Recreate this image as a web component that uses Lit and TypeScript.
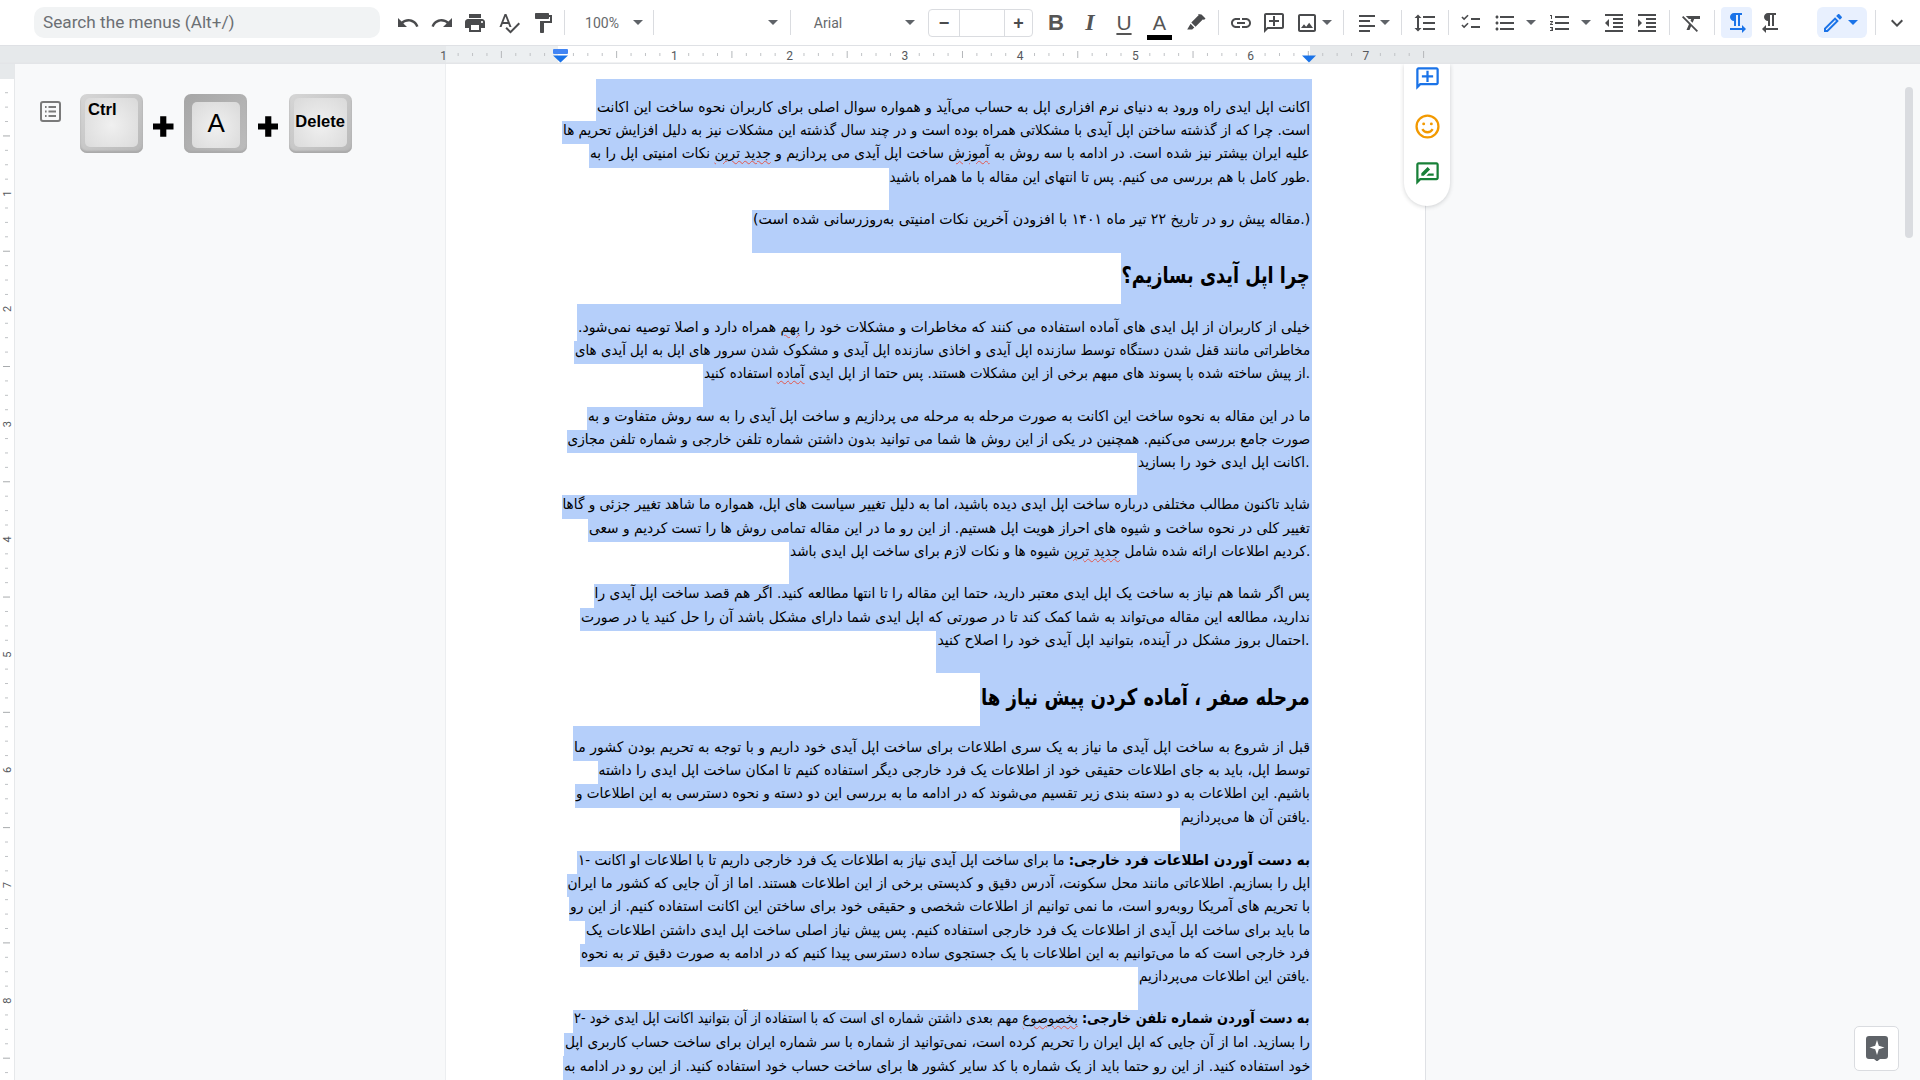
import { LitElement, html, css, svg, TemplateResult } from "lit";
import { customElement } from "lit/decorators.js";

const P: Record<string, string> = {
  undo: "M12.5 8c-2.65 0-5.05.99-6.9 2.6L2 7v9h9l-3.62-3.62c1.39-1.16 3.16-1.88 5.12-1.88 3.54 0 6.55 2.31 7.6 5.5l2.37-.78C21.08 11.03 17.15 8 12.5 8z",
  redo: "M18.4 10.6C16.55 8.99 14.15 8 11.5 8c-4.65 0-8.58 3.03-9.96 7.22L3.9 16c1.05-3.19 4.05-5.5 7.6-5.5 1.95 0 3.73.72 5.12 1.88L13 16h9V7l-3.6 3.6z",
  print: "M19 8H5c-1.66 0-3 1.34-3 3v6h4v4h12v-4h4v-6c0-1.66-1.34-3-3-3zm-3 11H8v-5h8v5zm3-7c-.55 0-1-.45-1-1s.45-1 1-1 1 .45 1 1-.45 1-1 1zm-1-9H6v4h12V3z",
  spell: "M12.45 16h2.09L9.43 3H7.57L2.46 16h2.09l1.12-3h5.64l1.14 3zm-6.02-5L8.5 5.48 10.57 11H6.43zm15.16.59l-8.09 8.09L9.83 16l-1.41 1.41 5.09 5.09L23 13l-1.41-1.41z",
  paint: "M18 4V3c0-.55-.45-1-1-1H5c-.55 0-1 .45-1 1v4c0 .55.45 1 1 1h12c.55 0 1-.45 1-1V6h1v4H9v11c0 .55.45 1 1 1h2c.55 0 1-.45 1-1v-9h8V4h-3z",
  marker: "M17.5 3.500l4 4-1.600 1.600-.9-.9-7.500 7.500-4.200-4.200 7.500-7.500-.9-.9zM6.600 12.700l3.700 3.700-2.100 2.100H3.200z",
  link: "M3.9 12c0-1.71 1.39-3.1 3.1-3.1h4V7H7c-2.76 0-5 2.24-5 5s2.24 5 5 5h4v-1.9H7c-1.71 0-3.1-1.39-3.1-3.1zM8 13h8v-2H8v2zm9-6h-4v1.9h4c1.71 0 3.1 1.39 3.1 3.1s-1.39 3.1-3.1 3.1h-4V17h4c2.76 0 5-2.24 5-5s-2.24-5-5-5z",
  comment: "M20 2H4c-1.1 0-2 .9-2 2v18l4-4h14c1.1 0 2-.9 2-2V4c0-1.1-.9-2-2-2zm0 14H5.17L4 17.17V4h16v12zM11 5h2v4h4v2h-4v4h-2v-4H7V9h4z",
  image: "M19 5v14H5V5h14m0-2H5c-1.1 0-2 .9-2 2v14c0 1.1.9 2 2 2h14c1.1 0 2-.9 2-2V5c0-1.1-.9-2-2-2zm-4.86 8.86l-3 3.87L9 13.14 6 17h12l-3.86-5.14z",
  align: "M4 4h16v2H4zM4 9h11v2H4zM4 14h16v2H4zM4 19h11v2H4z",
  spacing: "M6 7h2.5L5 3.5 1.5 7H4v10H1.5L5 20.5 8.5 17H6V7zm4-2v2h12V5H10zm0 14h12v-2H10v2zm0-6h12v-2H10v2z",
  check: "M13 7h9v2h-9zM13 15h9v2h-9zM3.4 6.6l1.1-1.1 1.6 1.6 3.4-3.4 1.1 1.1-4.5 4.5zM3.4 14.6l1.1-1.1 1.6 1.6 3.4-3.4 1.1 1.1-4.5 4.5z",
  bullets: "M4 10.5c-.83 0-1.5.67-1.5 1.5s.67 1.5 1.5 1.5 1.5-.67 1.5-1.5-.67-1.5-1.5-1.5zm0-6c-.83 0-1.5.67-1.5 1.5S3.17 7.5 4 7.5 5.5 6.83 5.5 6 4.83 4.5 4 4.5zm0 12c-.83 0-1.5.68-1.5 1.5s.68 1.5 1.5 1.5 1.5-.68 1.5-1.5-.67-1.5-1.5-1.5zM7 19h14v-2H7v2zm0-6h14v-2H7v2zm0-8v2h14V5H7z",
  numbers: "M2 17h2v.5H3v1h1v.5H2v1h3v-4H2v1zm1-9h1V4H2v1h1v3zm-1 3h1.8L2 13.1v.9h3v-1H3.2L5 10.9V10H2v1zm5-6v2h14V5H7zm0 14h14v-2H7v2zm0-6h14v-2H7v2z",
  outdent: "M11 17h10v-2H11v2zm-8-5l4 4V8l-4 4zm0 9h18v-2H3v2zM3 3v2h18V3H3zm8 6h10V7H11v2zm0 4h10v-2H11v2z",
  indent: "M3 21h18v-2H3v2zM3 8v8l4-4-4-4zm8 9h10v-2H11v2zM3 3v2h18V3H3zm8 6h10V7H11v2zm0 4h10v-2H11v2z",
  clear: "M3.27 5L2 6.27l6.97 6.97L6.5 19h3l1.57-3.66L16.73 21 18 19.73 3.55 5.27 3.27 5zM6 5v.18L8.82 8h2.4l-.72 1.68 2.1 2.1L14.21 8H20V5H6z",
  ltr: "M9 10v5h2V4h2v11h2V4h2V2H9C6.79 2 5 3.79 5 6s1.79 4 4 4zm12 8l-4-4v3H5v2h12v3l4-4z",
  rtl: "M10 10v5h2V4h2v11h2V4h2V2h-8C7.79 2 6 3.79 6 6s1.79 4 4 4zm-2 7v-3l-4 4 4 4v-3h12v-2H8z",
  pencil: "M14.06 9.02l.92.92L5.92 19H5v-.92l9.06-9.06M17.66 3c-.25 0-.51.1-.7.29l-1.83 1.83 3.75 3.75 1.83-1.83c.39-.39.39-1.02 0-1.41l-2.34-2.34c-.2-.2-.45-.29-.71-.29zm-3.6 3.19L3 17.25V21h3.75L17.81 9.94l-3.75-3.75z",
  chevron: "M16.59 8.59L12 13.17 7.41 8.59 6 10l6 6 6-6z",
  suggest: "M20 2H4c-1.1 0-2 .9-2 2v18l4-4h14c1.1 0 2-.9 2-2V4c0-1.1-.9-2-2-2zm0 14H5.17L4 17.17V4h16v12zM6.5 14v-2.2l5.6-5.6 2.2 2.2L8.7 14zM11 14l2-2h4.5v2z",
};

const icon = (n: string, cls = "ic") => html`<svg class=${cls} viewBox="0 0 24 24"><path d=${P[n]}></path></svg>`;

type Slot = { x: number; w: number; t: TemplateResult };
const ic = (n: string, cx: number): Slot => ({ x: cx - 12, w: 24, t: icon(n) });
const car = (cx: number): Slot => ({ x: cx - 5, w: 10, t: html`<i class="caret"></i>` });
const div = (cx: number): Slot => ({ x: cx - 0.5, w: 1, t: html`<i class="divider"></i>` });
const glyph = (cx: number, cls: string, s: string): Slot => ({ x: cx - 12, w: 24, t: html`<span class="glyph ${cls}">${s}</span>` });

const SLOTS: Slot[] = [
  { x: 34, w: 346, t: html`<div class="search">Search the menus (Alt+/)</div>` },
  ic("undo", 408), ic("redo", 442), ic("print", 475), ic("spell", 509), ic("paint", 543),
  div(564),
  { x: 584, w: 36, t: html`<span class="tt">100%</span>` },
  car(638), div(653), car(773), div(790),
  { x: 810, w: 36, t: html`<span class="tt">Arial</span>` },
  car(910),
  { x: 928, w: 105, t: html`<div class="size"><b>−</b><i></i><b>+</b></div>` },
  glyph(1056, "bold", "B"), glyph(1090, "ital", "I"), glyph(1124, "und", "U"),
  { x: 1147, w: 25, t: html`<span class="colorA"><span>A</span><i></i></span>` },
  ic("marker", 1196), div(1218), ic("link", 1241), ic("comment", 1274), ic("image", 1307),
  car(1327), div(1343), ic("align", 1367), car(1385), div(1401), ic("spacing", 1425), div(1448),
  ic("check", 1470), ic("bullets", 1505), car(1531), ic("numbers", 1560), car(1586),
  ic("outdent", 1614), ic("indent", 1647), div(1669), ic("clear", 1692), div(1714),
  { x: 1721, w: 31, t: html`<div class="active">${icon("ltr", "ic blue")}</div>` },
  ic("rtl", 1770),
  { x: 1817, w: 50, t: html`<div class="active wide">${icon("pencil", "ic blue")}<i class="caret bluec"></i></div>` },
  div(1875), ic("chevron", 1897),
];

type L = [number, number, string, string?];
// [top of band, left edge of selection, text, kind]
const LINES: L[] = [
  [78, 596, "اکانت اپل ایدی راه ورود به دنیای نرم افزاری اپل به حساب می\u200cآید و همواره سوال اصلی برای کاربران نحوه ساخت این اکانت", "b"],
  [120, 562, "است. چرا که از گذشته ساختن اپل آیدی با مشکلاتی همراه بوده است و در چند سال گذشته این مشکلات نیز به دلیل افزایش تحریم ها"],
  [143.3, 589, "علیه ایران بیشتر نیز شده است. در ادامه با سه روش به ~آموزش~ ساخت اپل آیدی می پردازیم و ~جدید ترین~ نکات امنیتی اپل را به"],
  [166.7, 888.5, "طور کامل با هم بررسی می کنیم. پس تا انتهای این مقاله با ما همراه باشید.", "t"],
  [209, 752, "(مقاله پیش رو در تاریخ ۲۲ تیر ماه ۱۴۰۱ با افزودن آخرین نکات امنیتی به\u200cروزرسانی شده است.)", "t"],
  [251.7, 1120.6, "چرا اپل آیدی بسازیم؟", "h"],
  [303.3, 577, "خیلی از کاربران از اپل ایدی های آماده استفاده می کنند که مخاطرات و مشکلات خود را ~بهم~ همراه دارد و اصلا توصیه نمی\u200cشود.\u200f", "b"],
  [340, 574, "مخاطراتی مانند قفل شدن دستگاه توسط سازنده اپل آیدی و اخاذی سازنده اپل آیدی و مشکوک شدن سرور های اپل به اپل آیدی های"],
  [362.7, 703, "از پیش ساخته شده با پسوند های مبهم برخی از این مشکلات هستند. پس حتما از اپل ایدی ~آماده~ استفاده کنید.", "t"],
  [406, 587, "ما در این مقاله به نحوه ساخت این اکانت به صورت مرحله به مرحله می پردازیم و ساخت اپل آیدی را به سه روش متفاوت و به"],
  [429.3, 566.5, "صورت جامع بررسی می\u200cکنیم. همچنین در یکی از این روش ها شما می توانید بدون داشتن شماره تلفن خارجی و شماره تلفن مجازی"],
  [452, 1137, "اکانت اپل ایدی خود را بسازید.", "t"],
  [494, 561.5, "شاید تاکنون مطالب مختلفی درباره ساخت اپل ایدی دیده باشید، اما به دلیل تغییر سیاست های اپل، همواره ما شاهد تغییر جزئی و گاها"],
  [517.7, 588, "تغییر کلی در نحوه ساخت و شیوه های احراز هویت اپل هستیم. از این رو ما در این مقاله تمامی روش ها را تست کردیم و سعی"],
  [541, 789, "کردیم اطلاعات ارائه شده شامل ~جدید ترین~ شیوه ها و نکات لازم برای ساخت اپل ایدی باشد.", "t"],
  [583.3, 593.6, "پس اگر شما هم نیاز به ساخت یک اپل ایدی معتبر دارید، حتما این مقاله را تا انتها مطالعه کنید. اگر هم قصد ساخت اپل آیدی را"],
  [606.7, 580, "ندارید، مطالعه این مقاله می\u200cتواند به شما کمک کند تا در صورتی که اپل ایدی شما دارای مشکل باشد آن را حل کنید یا در صورت"],
  [630, 936.4, "احتمال بروز مشکل در آینده، بتوانید اپل آیدی خود را اصلاح کنید.", "t"],
  [672.3, 980, "مرحله صفر ، آماده کردن پیش نیاز ها", "h"],
  [725, 573, "قبل از شروع به ساخت اپل آیدی ما نیاز به یک سری اطلاعات برای ساخت اپل آیدی خود داریم و با توجه به تحریم بودن کشور ما", "b"],
  [760, 597.5, "توسط اپل، باید به جای اطلاعات حقیقی خود از اطلاعات یک فرد خارجی دیگر استفاده کنیم تا امکان ساخت اپل ایدی را داشته"],
  [783.3, 575, "باشیم. این اطلاعات به دو دسته بندی زیر تقسیم می\u200cشوند که در ادامه ما به بررسی این دو دسته و نحوه دسترسی به این اطلاعات و"],
  [806.7, 1180, "یافتن آن ها می\u200cپردازیم.", "t"],
  [850, 577, "۱- **به دست آوردن اطلاعات فرد خارجی:** ما برای ساخت اپل آیدی نیاز به اطلاعات یک فرد خارجی داریم تا با اطلاعات او اکانت"],
  [873, 566.5, "اپل را بسازیم. اطلاعاتی مانند محل سکونت، آدرس دقیق و کدپستی برخی از این اطلاعات هستند. اما از آن جایی که کشور ما ایران"],
  [896, 569, "با تحریم های آمریکا روبه\u200cرو است، ما نمی توانیم از اطلاعات شخصی و حقیقی خود برای ساختن این اکانت استفاده کنیم. از این رو"],
  [920, 585, "ما باید برای ساخت اپل آیدی از اطلاعات یک فرد خارجی استفاده کنیم. پس پیش نیاز اصلی ساخت اپل ایدی داشتن اطلاعات یک"],
  [942.7, 580, "فرد خارجی است که ما می\u200cتوانیم به این اطلاعات با یک جستجوی ساده دسترسی پیدا کنیم که در ادامه به صورت دقیق تر به نحوه"],
  [966, 1138, "یافتن این اطلاعات می\u200cپردازیم.", "t"],
  [1008.7, 573, "۲- **به دست آوردن شماره تلفن خارجی:** ~بخصوصوع~ مهم بعدی داشتن شماره ای است که با استفاده از آن بتوانید اکانت اپل ایدی خود"],
  [1031.7, 564, "را بسازید. اما از آن جایی که اپل ایران را تحریم کرده است، نمی\u200cتوانید از شماره با سر شماره ایران برای ساخت حساب کاربری اپل"],
  [1055, 563, "خود استفاده کنید. از این رو حتما باید از یک شماره با کد سایر کشور ها برای ساخت حساب خود استفاده کنید. از این رو در ادامه به"],
];

const rich = (s: string) =>
  s.split(/(\*\*.+?\*\*|~.+?~)/).map((p) =>
    p.startsWith("**") ? html`<b>${p.slice(2, -2)}</b>` : p.startsWith("~") ? html`<span class="sq">${p.slice(1, -1)}</span>` : p
  );

const RIGHT = 1312;

@customElement("app-root")
export class AppRoot extends LitElement {
  static styles = css`
    :host { display: block; width: 1920px; height: 1080px; overflow: hidden; background: #f8f9fa; font-family: "Liberation Sans", Arial, sans-serif; }
    .toolbar { height: 45px; background: #fff; border-bottom: 1px solid #dfe1e5; display: flex; align-items: center; }
    .slot { flex: none; display: flex; align-items: center; justify-content: center; }
    .search { width: 100%; height: 31px; box-sizing: border-box; background: #f1f3f4; border-radius: 10px; padding-left: 9px; color: #6b6f73; font: 17.2px/30px Roboto, sans-serif; }
    .ic { width: 24px; height: 24px; fill: #4a4b4d; display: block; flex: none; }
    .ic.blue { fill: #1a73e8; }
    .caret { display: block; width: 0; height: 0; border-left: 5px solid transparent; border-right: 5px solid transparent; border-top: 5px solid #5f6368; }
    .caret.bluec { border-top-color: #1a73e8; }
    .divider { display: block; width: 1px; height: 25px; background: #dadce0; }
    .tt { font: 14px Roboto, sans-serif; color: #66696c; }
    .size { width: 100%; height: 28px; box-sizing: border-box; border: 1px solid #dadce0; border-radius: 4px; display: grid; grid-template-columns: 30px 46px 1fr; }
    .size b { font: 700 18px/26px "Liberation Sans", sans-serif; color: #4a4b4d; text-align: center; }
    .size i { border-left: 1px solid #dadce0; border-right: 1px solid #dadce0; }
    .glyph { font: 22px "Liberation Sans", sans-serif; color: #555; }
    .bold { font-weight: 700; }
    .ital { font-family: "Liberation Serif", serif; font-style: italic; font-weight: 700; font-size: 24px; }
    .und { text-decoration: underline 2px; text-underline-offset: 3px; font-size: 21px; }
    .colorA { display: flex; flex-direction: column; align-items: center; width: 100%; font-size: 20px; color: #555; line-height: 21px; margin-top: 7px; }
    .colorA i { width: 100%; height: 5px; background: #000; margin-top: 1px; }
    .active { width: 100%; height: 31px; background: #e8f0fe; border-radius: 4px; display: flex; align-items: center; justify-content: center; }
    .active.wide { gap: 3px; justify-content: flex-start; padding-left: 4px; box-sizing: border-box; border-radius: 6px; }
    .ruler { display: block; width: 1920px; height: 18px; }
    .main { position: relative; height: 1017px; display: flex; overflow: hidden; }
    .vruler { flex: none; display: block; width: 15px; height: 1017px; }
    .left { flex: none; width: 431px; box-sizing: border-box; padding: 30px 0 0 25px; display: flex; align-items: flex-start; }
    .outline { flex: none; width: 21px; height: 21px; margin: 7px 19px 0 0; color: #7a7a7a; }
    .keys { display: flex; gap: 10.4px; align-items: center; }
    .key { width: 63px; height: 59px; box-sizing: border-box; border-radius: 7px; padding: 4px 5px 6px; background: linear-gradient(135deg, #d6d6d6, #b8b8b8); box-shadow: inset 0 -2px 2px #a9a9a9; }
    .key.dark { padding: 8px 7px 5px 8px; background: linear-gradient(135deg, #a6a6a6, #bdbdbd); }
    .face { height: 100%; border-radius: 5px; background: radial-gradient(circle at 50% 55%, #f0f0f0, #d9d9d9); display: flex; align-items: center; justify-content: center; color: #000; font-weight: 700; font-size: 16.5px; padding-bottom: 3px; box-sizing: border-box; }
    .face.tl { align-items: flex-start; justify-content: flex-start; padding: 2px 0 0 3px; font-size: 16.6px; }
    .face.thin { font-weight: 400; font-size: 26px; }
    .plus { width: 20.5px; height: 21px; flex: none; fill: #000; display: block; margin-top: 5px; }
    .page { flex: none; position: relative; width: 980px; box-sizing: border-box; background: #fff; border-right: 1px solid #dfe1e5; box-shadow: -1px 0 0 #eceef0; padding-right: 113px; }
    .flow { display: flex; flex-direction: column; align-items: flex-end; padding-top: 15px; }
    .line { display: flex; justify-content: flex-end; align-items: center; background: #b5cffa; flex: none; }
    .line.t { align-items: flex-start; }
    .line.b { align-items: flex-end; }
    .txt { display: block; flex: none; white-space: pre; direction: ltr; text-align: right; margin: -3px 2px 3px 0; transform-origin: 100% 50%; font: 14.6px/23.3px "DejaVu Sans", sans-serif; color: #000; }
    .line.h .txt { font-weight: 700; font-size: 23px; line-height: 30px; color: #000; }
    .sq { text-decoration: underline wavy #e2574c 1px; text-underline-offset: 2px; }
    .rail { position: absolute; left: 958px; top: 0; width: 46px; height: 142px; background: #fff; border-radius: 0 0 23px 23px; box-shadow: 0 1px 4px rgba(60, 64, 67, .22); display: flex; flex-direction: column; align-items: center; }
    .rail svg { display: block; flex: none; width: 27px; height: 27px; }
    .rail .a { fill: #1a73e8; margin-top: 1px; }
    .rail .e { margin-top: 22px; width: 25px; height: 25px; }
    .rail .s { fill: #188038; margin-top: 21px; }
    .right { flex: 1; position: relative; }
    .thumb { position: absolute; right: 7px; top: 23px; width: 8px; height: 151px; border-radius: 4px; background: #dadce0; }
    .assist { position: absolute; right: 21px; top: 962px; width: 45px; height: 45px; box-sizing: border-box; background: #fff; border: 1px solid #dadce0; border-radius: 5px; display: flex; align-items: center; justify-content: center; }
    .assist svg { display: block; width: 22px; height: 25px; }
  `;

  private hruler() {
    const items = [];
    const x0 = 559;
    const step = 14.41;
    for (let n = -8; n <= 60; n++) {
      const x = x0 + n * step;
      if (n % 8 === 0) {
        const label = Math.abs(n / 8);
        if (n !== 0) items.push(svg`<text x=${x} y="13.5" text-anchor="middle" font-family="Roboto, sans-serif" font-size="12" fill="#55585c">${label}</text>`);
      } else if (n % 4 === 0) {
        items.push(svg`<line x1=${x} x2=${x} y1="5" y2="12" stroke="#b4b7ba"></line>`);
      } else {
        items.push(svg`<line x1=${x} x2=${x} y1="7" y2="10" stroke="#c0c3c6"></line>`);
      }
    }
    return html`<svg class="ruler" viewBox="0 0 1920 18">
      <rect width="1920" height="18" fill="#e6e9eb"></rect>
      <rect x="446" width="112" height="17" fill="#eceff1"></rect>
      <rect x="558" width="752" height="17" fill="#fff"></rect>
      <rect y="16.5" width="1920" height="1.5" fill="#e3e5e8"></rect>
      ${items}
      <rect x="553" y="3" width="15" height="5" rx="1" fill="#4285f4"></rect>
      <path d="M553 9.5h15l-7.5 7z" fill="#1a73e8"></path>
      <path d="M1302 9.5h14l-7 7z" fill="#1a73e8"></path>
    </svg>`;
  }

  private vruler() {
    const items = [];
    const y0 = 14.3;
    const step = 14.41;
    for (let n = 0; n <= 70; n++) {
      const y = y0 + n * step;
      if (n % 8 === 0) {
        if (n > 0) items.push(svg`<text transform="translate(11 ${y}) rotate(-90)" text-anchor="middle" font-family="Roboto, sans-serif" font-size="11" fill="#55585c">${n / 8}</text>`);
      } else if (n % 4 === 0) {
        items.push(svg`<line x1="3" x2="10" y1=${y} y2=${y} stroke="#a8abae"></line>`);
      } else {
        items.push(svg`<line x1="5" x2="8" y1=${y} y2=${y} stroke="#bfc2c5"></line>`);
      }
    }
    return html`<svg class="vruler" viewBox="0 0 15 1017">
      <rect width="15" height="1017" fill="#fff"></rect>
      <rect width="14" height="15" fill="#e6e9eb"></rect>
      <rect x="14" width="1" height="1017" fill="#e6e8ea"></rect>
      ${items}
    </svg>`;
  }

  firstUpdated() {
    this.renderRoot.querySelectorAll<HTMLElement>(".txt").forEach((el) => {
      const target = Number(el.dataset.w);
      const natural = el.offsetWidth;
      if (natural > 0) el.style.transform = `scaleX(${(target / natural).toFixed(4)})`;
    });
  }

  render() {
    let cursor = 0;
    return html`
      <div class="toolbar">
        ${SLOTS.map((s) => {
          const m = s.x - cursor;
          cursor = s.x + s.w;
          return html`<div class="slot" style="margin-left:${m}px;width:${s.w}px">${s.t}</div>`;
        })}
      </div>
      ${this.hruler()}
      <div class="main">
        ${this.vruler()}
        <div class="left">
          <svg class="outline" viewBox="0 0 21 21" fill="none" stroke="currentColor">
            <rect x="1" y="1" width="19" height="19" rx="2" stroke-width="2"></rect>
            <path d="M5 6h1.6M5 10.500h1.6M5 15h1.600M8.500 6H16M8.500 10.500H16M8.500 15H16" stroke-width="2"></path>
          </svg>
          <div class="keys">
            <div class="key"><div class="face tl">Ctrl</div></div>
            <svg class="plus" viewBox="0 0 20 20"><path d="M7 0h6v7h7v6h-7v7H7v-7H0V7h7z"></path></svg>
            <div class="key dark"><div class="face thin">A</div></div>
            <svg class="plus" viewBox="0 0 20 20"><path d="M7 0h6v7h7v6h-7v7H7v-7H0V7h7z"></path></svg>
            <div class="key"><div class="face">Delete</div></div>
          </div>
        </div>
        <div class="page">
          <div class="flow">
            ${LINES.map((l, i) => {
              const next = i + 1 < LINES.length ? LINES[i + 1][0] : 1080;
              const w = RIGHT - l[1];
              return html`<div class="line ${l[3] ?? ""}" style="width:${w}px;height:${(next - l[0]).toFixed(1)}px">
                <span class="txt" data-w=${w - 3}>${rich(l[2])}</span>
              </div>`;
            })}
          </div>
          <div class="rail">
            <svg class="a" viewBox="0 0 24 24"><path d=${P.comment}></path></svg>
            <svg class="e" viewBox="0 0 24 24" fill="none" stroke="#f29900" stroke-width="2.200">
              <circle cx="12" cy="12" r="10.500"></circle>
              <circle cx="8.300" cy="9.500" r="1.400" fill="#f29900" stroke="none"></circle>
              <circle cx="15.700" cy="9.500" r="1.400" fill="#f29900" stroke="none"></circle>
              <path d="M7 14.500c1.200 2 3 3 5 3s3.800-1 5-3"></path>
            </svg>
            <svg class="s" viewBox="0 0 24 24"><path d=${P.suggest}></path></svg>
          </div>
        </div>
        <div class="right">
          <div class="thumb"></div>
          <div class="assist">
            <svg viewBox="0 0 22 25">
              <path d="M3 0h16a3 3 0 0 1 3 3v17a3 3 0 0 1-3 3h-5l-3 2.500L8 23H3a3 3 0 0 1-3-3V3a3 3 0 0 1 3-3z" fill="#5f6368"></path>
              <path d="M11 4l1.800 5.700L18.500 11.500l-5.700 1.800L11 19l-1.800-5.700L3.500 11.500l5.700-1.800z" fill="#fff"></path>
            </svg>
          </div>
        </div>
      </div>
    `;
  }
}
